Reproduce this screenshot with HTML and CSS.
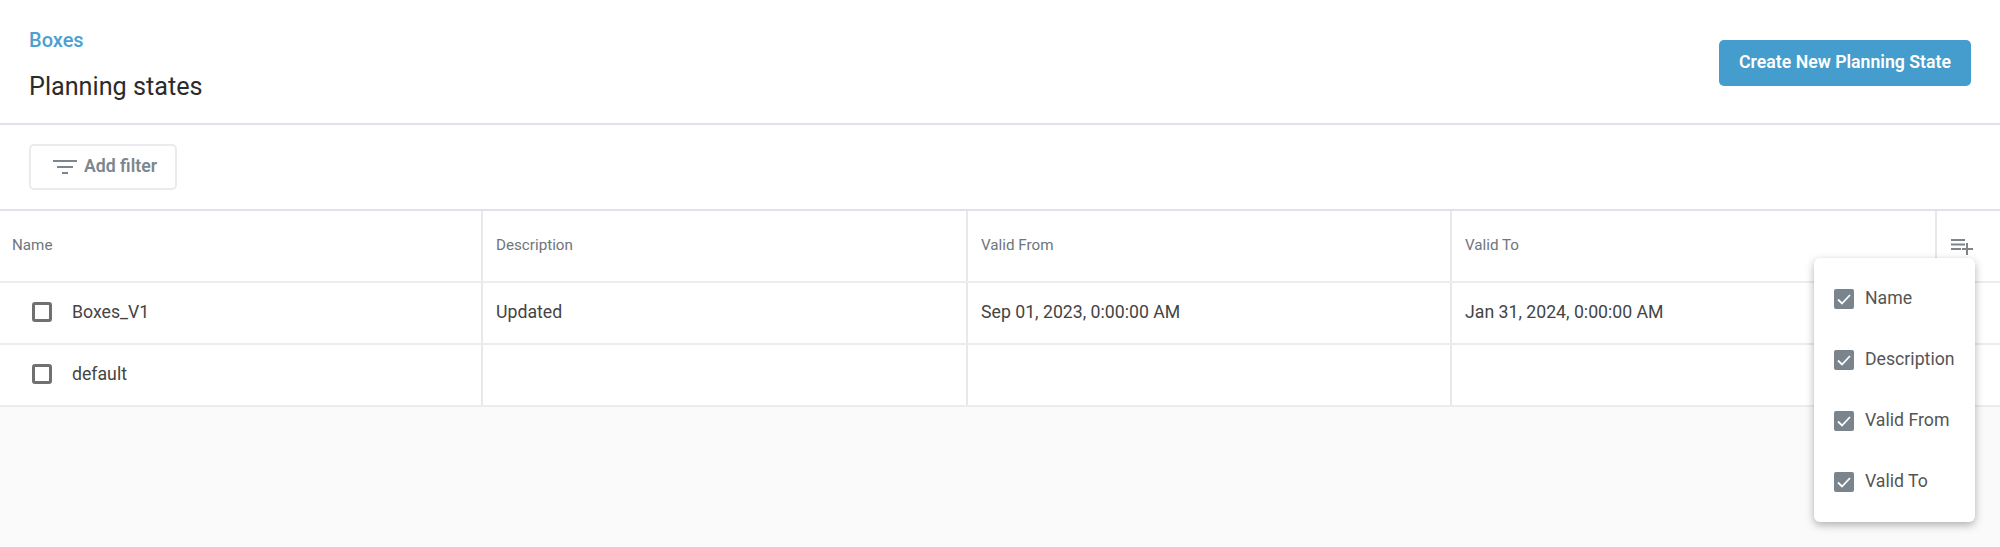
FILE: index.html
```html
<!DOCTYPE html>
<html lang="en">
<head>
<meta charset="utf-8">
<title>Planning states</title>
<link rel="stylesheet" href="styles.css">
</head>
<body>
<div class="page">
  <header class="header">
    <div class="titles">
      <a class="crumb">Boxes</a>
      <h1 class="title">Planning states</h1>
    </div>
    <button class="primary">Create New Planning State</button>
  </header>
  <div class="toolbar">
    <button class="filter">
      <svg class="filter-icon" viewBox="0 0 24 16" width="24" height="16"><path d="M0 1h24v2H0zM4 7h16v2H4zM9 13h6v2H9z"/></svg>
      <span>Add filter</span>
    </button>
  </div>
  <div class="table">
    <div class="row head">
      <div class="cell">Name</div>
      <div class="cell">Description</div>
      <div class="cell">Valid From</div>
      <div class="cell">Valid To</div>
      <div class="cell tool">
        <svg viewBox="0 0 24 18" width="24" height="18"><path d="M1 1h14v2H1zM1 5.5h14v2H1zM1 10h10v2H1zM16 5h2v5h5v2h-5v5h-2v-5h-4v-2h4z"/></svg>
      </div>
    </div>
    <div class="row">
      <div class="cell name"><span class="box"></span>Boxes_V1</div>
      <div class="cell">Updated</div>
      <div class="cell">Sep 01, 2023, 0:00:00 AM</div>
      <div class="cell">Jan 31, 2024, 0:00:00 AM</div>
      <div class="cell"></div>
    </div>
    <div class="row">
      <div class="cell name"><span class="box"></span>default</div>
      <div class="cell"></div>
      <div class="cell"></div>
      <div class="cell"></div>
      <div class="cell"></div>
    </div>
  </div>
  <div class="menu">
    <div class="menu-item"><span class="checked"><svg viewBox="0 0 20 20" width="20" height="20"><path d="M4 10.5l4 4 8-8.5" fill="none" stroke="#fff" stroke-width="1.8"/></svg></span>Name</div>
    <div class="menu-item"><span class="checked"><svg viewBox="0 0 20 20" width="20" height="20"><path d="M4 10.5l4 4 8-8.5" fill="none" stroke="#fff" stroke-width="1.8"/></svg></span>Description</div>
    <div class="menu-item"><span class="checked"><svg viewBox="0 0 20 20" width="20" height="20"><path d="M4 10.5l4 4 8-8.5" fill="none" stroke="#fff" stroke-width="1.8"/></svg></span>Valid From</div>
    <div class="menu-item"><span class="checked"><svg viewBox="0 0 20 20" width="20" height="20"><path d="M4 10.5l4 4 8-8.5" fill="none" stroke="#fff" stroke-width="1.8"/></svg></span>Valid To</div>
  </div>
</div>
</body>
</html>
```
FILE: styles.css
```css
* { box-sizing: border-box; }
html, body { margin: 0; height: 100%; overflow: hidden; }
body { font-family: Roboto, "Liberation Sans", sans-serif; background: #fafafa; color: #444; }
.page { position: relative; height: 547px; }
.header {
  height: 125px; background: #fff; border-bottom: 2px solid #e0e0ee;
  display: flex; justify-content: space-between; padding: 0 29px 0 29px;
}
.titles { display: flex; flex-direction: column; }
.crumb { color: #4aa0d0; font-size: 20px; font-weight: 500; line-height: 24px; margin-top: 28px; }
.title { margin: 18px 0 0; font-size: 25.2px; font-weight: 400; line-height: 34px; color: #2b2b2b; }
.primary {
  margin-top: 40px; width: 252px; height: 46px; border: 0; border-radius: 5px;
  background: #449dcc; color: #fff; font: 600 17.7px Roboto, sans-serif; padding: 0 0 2px;
}
.toolbar { height: 84px; background: #fff; padding: 19px 29px 0; }
.filter {
  width: 148px; height: 46px; background: #fff; border: 2px solid #ebebef; border-radius: 5px;
  display: flex; align-items: center; gap: 7px; padding: 0 0 2px 22px;
  color: #7d868c; font: 600 17.7px Roboto, sans-serif;
}
.filter-icon { fill: #7d868c; margin-top: 2px; }
.table { background: #fff; border-top: 2px solid #e0e0ee; }
.row {
  display: grid; grid-template-columns: 483px 485px 484px 485px 63px;
  height: 62px; border-bottom: 2px solid #ececec;
}
.row.head { height: 72px; }
.cell {
  border-right: 2px solid #e8e8e8; padding: 0 10px 2px 13px; display: flex; align-items: center;
  font-size: 17.7px; color: #444;
}
.cell:first-child { padding-left: 12px; }
.cell:last-child { border-right: 0; }
.head .cell { font-size: 15.2px; font-weight: 400; color: #6e767c; }
.head .tool { align-items: flex-start; padding: 27px 0 0 13px; }
.tool svg { fill: #7d868c; }
.cell.name { padding-left: 32px; gap: 20px; }
.box { width: 20px; height: 20px; border: 3px solid #707070; border-radius: 3px; }
.menu {
  position: absolute; left: 1814px; top: 258px; width: 161px; height: 264px;
  background: #fff; border-radius: 6px; box-shadow: 0 3px 8px rgba(0,0,0,.3);
  padding: 9px 0 0 20px;
}
.menu-item { height: 61px; display: flex; align-items: center; gap: 11px; font-size: 17.7px; line-height: 20px; color: #555; }
.checked { width: 20px; height: 20px; background: #79848c; border-radius: 2px; display: block; margin-top: 2px; }
.checked svg { display: block; }
```
